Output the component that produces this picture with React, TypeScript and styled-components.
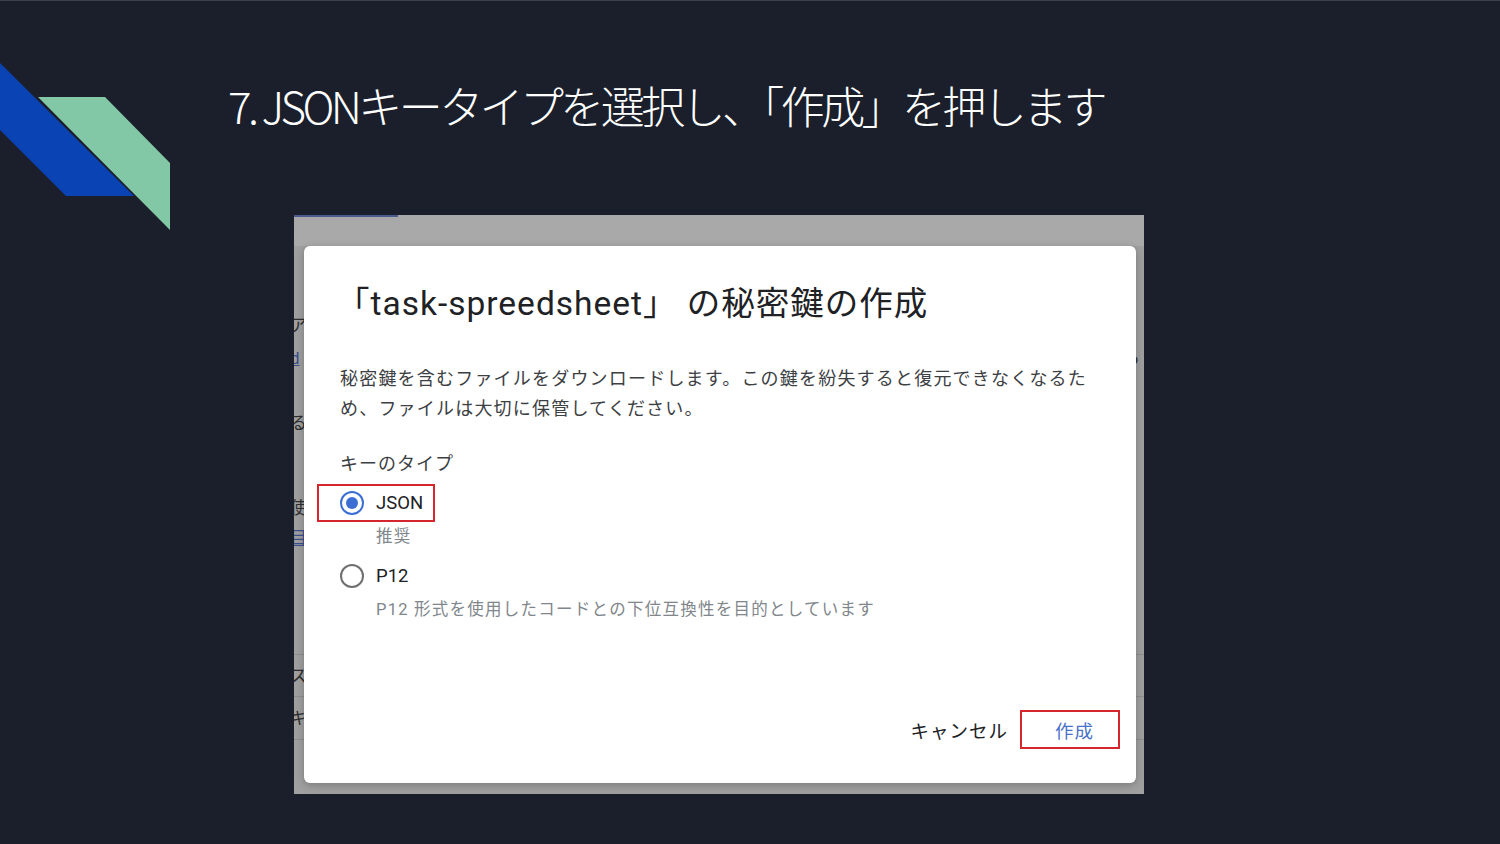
import React from "react";
import styled, { createGlobalStyle } from "styled-components";

const GlobalStyle = createGlobalStyle`
  html, body {
    margin: 0;
    padding: 0;
    background: #1b1f2b;
  }
  body {
    font-family: Roboto, "Noto Sans CJK JP", sans-serif;
  }
`;

const Slide = styled.div`
  width: 1500px;
  height: 844px;
  box-sizing: border-box;
  border-top: 1px solid #3b404b;
  background: #1b1f2b;
  display: grid;
  grid-template-columns: 170px 1fr;
  grid-template-rows: 214px 1fr;
  column-gap: 58px;
  overflow: hidden;
`;

const Deco = styled.svg`
  grid-row: 1 / span 2;
  margin-top: 62px;
  display: block;
`;

const Title = styled.h1`
  margin: 0;
  padding-top: 75px;
  font-family: "Noto Sans CJK JP", sans-serif;
  font-weight: 300;
  font-size: 44px;
  line-height: 58px;
  letter-spacing: -3.6px;
  color: #ffffff;
  white-space: nowrap;
`;

const Shot = styled.div`
  position: relative;
  margin-left: 66px;
  width: 850px;
  height: 579px;
  background: #a0a0a0;
  overflow: hidden;
`;

const PageTop = styled.div`
  height: 31px;
  background: linear-gradient(#a8a8a8, #aaaaaa);
`;

const TabLine = styled.div`
  width: 104px;
  height: 2px;
  background: #4a5a8e;
`;

const PageBody = styled.div`
  display: flex;
  flex-direction: column;
  padding-top: 59px;
`;

const PageRow = styled.div<{ $h: number; $line?: boolean }>`
  height: ${(p) => p.$h}px;
  box-sizing: border-box;
  display: flex;
  align-items: center;
  justify-content: space-between;
  padding-right: 4px;
  font-size: 17px;
  line-height: 30px;
  color: #2a2a2a;
  border-bottom: ${(p) => (p.$line ? "1px solid #8e8e8e" : "none")};
`;

const PeekStack = styled.div`
  display: flex;
  flex-direction: column;
`;

const Peek = styled.span<{ $link?: boolean }>`
  color: ${(p) => (p.$link ? "#3c4f8e" : "#2e2e2e")};
  text-decoration: ${(p) => (p.$link ? "underline" : "none")};
  margin-left: -4px;
`;

const Dialog = styled.div`
  position: absolute;
  left: 10px;
  top: 31px;
  width: 832px;
  height: 537px;
  box-sizing: border-box;
  background: #ffffff;
  border-radius: 6px;
  box-shadow: 0 2px 8px rgba(0, 0, 0, 0.25);
  padding: 34px 16px 34px 36px;
  display: flex;
  flex-direction: column;
`;

const DialogTitle = styled.div`
  font-size: 33.5px;
  line-height: 48px;
  color: #202124;
  letter-spacing: 1px;
  margin-left: -4px;
`;

const Body = styled.p`
  margin: 36px 0 0 0;
  font-size: 18px;
  line-height: 30px;
  letter-spacing: 1.2px;
  color: #3c4043;
  width: 756px;
`;

const Label = styled.div`
  margin-top: 27px;
  font-size: 18px;
  line-height: 26px;
  letter-spacing: 1px;
  color: #3c4043;
`;

const Option = styled.div<{ $top: number }>`
  margin-top: ${(p) => p.$top}px;
  display: flex;
  flex-direction: column;
`;

const OptionMain = styled.div<{ $marked?: boolean }>`
  display: flex;
  align-items: center;
  gap: 12px;
  height: 36px;
  width: fit-content;
  box-sizing: border-box;
  padding: 0 11px 0 22px;
  margin-left: -22px;
  outline: ${(p) => (p.$marked ? "2px solid #d6262d" : "none")};
  outline-offset: -1px;
`;

const Radio = styled.span<{ $on?: boolean }>`
  width: 24px;
  height: 24px;
  box-sizing: border-box;
  border-radius: 50%;
  border: 2.5px solid ${(p) => (p.$on ? "#3b6fd4" : "#6f6f6f")};
  display: flex;
  align-items: center;
  justify-content: center;
  &::after {
    content: "";
    width: 12px;
    height: 12px;
    border-radius: 50%;
    background: #3b6fd4;
    display: ${(p) => (p.$on ? "block" : "none")};
  }
`;

const OptionName = styled.span`
  font-size: 18.5px;
  color: #202124;
`;

const OptionNote = styled.span`
  margin-left: 36px;
  margin-top: 3px;
  font-size: 16.5px;
  line-height: 26px;
  letter-spacing: 1.25px;
  color: #80868b;
`;

const Actions = styled.div`
  margin-top: auto;
  display: flex;
  justify-content: flex-end;
  align-items: center;
  gap: 10px;
`;

const TextButton = styled.button<{ $primary?: boolean; $marked?: boolean }>`
  font-family: "Noto Sans CJK JP", sans-serif;
  font-size: 18.5px;
  letter-spacing: 1px;
  background: none;
  border: ${(p) => (p.$marked ? "2px solid #d6262d" : "2px solid transparent")};
  color: ${(p) => (p.$primary ? "#4a72c8" : "#202124")};
  height: 39px;
  padding: 0 ${(p) => (p.$primary ? "24px 0 33px" : "0")};
  cursor: pointer;
`;

export default function App() {
  return (
    <>
      <GlobalStyle />
      <Slide>
        <Deco width="170" height="170" viewBox="0 0 170 170">
          <polygon points="0,0 134,133 66,133 0,67" fill="#0a43b4" />
          <polygon points="38,34 105,34 170,100 170,167" fill="#82c8a6" />
        </Deco>
        <Title>7. JSONキータイプを選択し、「作成」を押します</Title>
        <Shot>
          <PageTop>
            <TabLine />
          </PageTop>
          <PageBody>
            <PageRow $h={40}>
              <Peek>ア</Peek>
            </PageRow>
            <PageRow $h={26}>
              <Peek $link>d</Peek>
              <Peek>ら</Peek>
            </PageRow>
            <PageRow $h={104}>
              <Peek>る</Peek>
            </PageRow>
            <PageRow $h={96}>
              <PeekStack>
                <Peek>使</Peek>
                <Peek $link>目</Peek>
              </PeekStack>
            </PageRow>
            <PageRow $h={84} $line />
            <PageRow $h={42} $line>
              <Peek>ス</Peek>
            </PageRow>
            <PageRow $h={43} $line>
              <Peek>キ</Peek>
            </PageRow>
          </PageBody>
          <Dialog>
            <DialogTitle>「task-spreedsheet」 の秘密鍵の作成</DialogTitle>
            <Body>
              秘密鍵を含むファイルをダウンロードします。この鍵を紛失すると復元できなくなるため、ファイルは大切に保管してください。
            </Body>
            <Label>キーのタイプ</Label>
            <Option $top={8}>
              <OptionMain $marked>
                <Radio $on />
                <OptionName>JSON</OptionName>
              </OptionMain>
              <OptionNote>推奨</OptionNote>
            </Option>
            <Option $top={8}>
              <OptionMain>
                <Radio />
                <OptionName>P12</OptionName>
              </OptionMain>
              <OptionNote>P12 形式を使用したコードとの下位互換性を目的としています</OptionNote>
            </Option>
            <Actions>
              <TextButton>キャンセル</TextButton>
              <TextButton $primary $marked>
                作成
              </TextButton>
            </Actions>
          </Dialog>
        </Shot>
      </Slide>
    </>
  );
}
